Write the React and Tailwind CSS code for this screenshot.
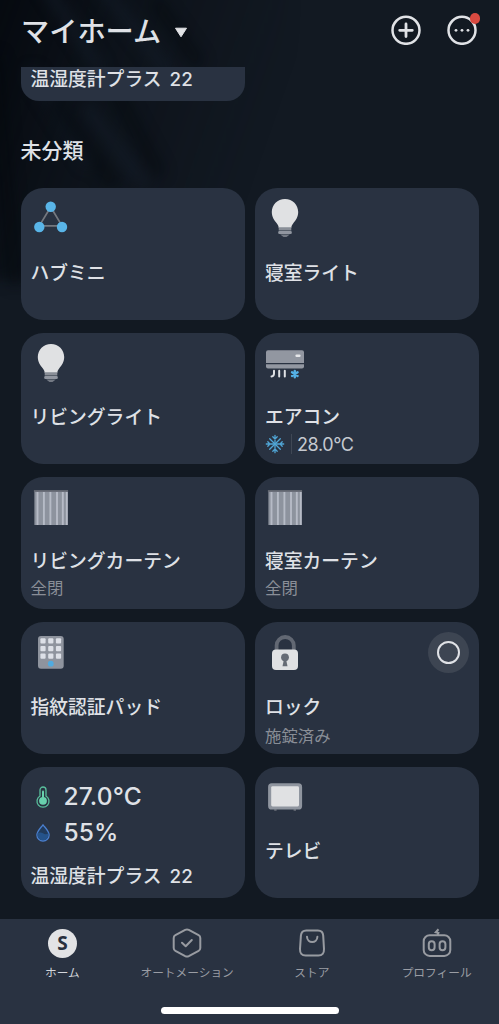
const icons = {
  hub: HubIcon,
  bulb: BulbIcon,
  aircon: AirconIcon,
  curtain: CurtainIcon,
  keypad: KeypadIcon,
  lock: LockIcon,
  tv: TvIcon,
};

const devices = [
  { id: "hub", icon: "hub", name: "ハブミニ" },
  { id: "bed-light", icon: "bulb", name: "寝室ライト" },
  { id: "living-light", icon: "bulb", name: "リビングライト" },
  { id: "aircon", icon: "aircon", name: "エアコン", temperature: "28.0°C" },
  { id: "living-curtain", icon: "curtain", name: "リビングカーテン", status: "全閉" },
  { id: "bed-curtain", icon: "curtain", name: "寝室カーテン", status: "全閉" },
  { id: "keypad", icon: "keypad", name: "指紋認証パッド" },
  { id: "lock", icon: "lock", name: "ロック", status: "施錠済み", action: true },
  { id: "meter", name: "温湿度計プラス 22", temperature: "27.0°C", humidity: "55%" },
  { id: "tv", icon: "tv", name: "テレビ" },
];

const tabs = [
  { label: "ホーム", icon: HomeTabIcon, active: true },
  { label: "オートメーション", icon: AutomationTabIcon },
  { label: "ストア", icon: StoreTabIcon },
  { label: "プロフィール", icon: ProfileTabIcon },
];

function HubIcon() {
  return (
    <svg className="size-10" viewBox="0 0 40 40">
      <path d="M19.7 9 8.3 27.8H31Z" fill="none" stroke="#74787f" strokeWidth="1.7" />
      <g fill="#59b5e8">
        <circle cx="19.7" cy="8.8" r="5.2" />
        <circle cx="8.3" cy="29" r="5.2" />
        <circle cx="31" cy="29" r="5.2" />
      </g>
    </svg>
  );
}

function BulbIcon() {
  return (
    <svg className="size-10" viewBox="0 0 40 40">
      <path
        d="M20 1C12.4 1 6.8 6.8 6.8 14.1c0 5 2.5 8.3 4.9 11.2 1.3 1.6 1.9 2.7 1.9 4.5h12.8c0-1.8.6-2.9 1.9-4.5 2.4-2.9 4.9-6.2 4.9-11.2C33.2 6.8 27.6 1 20 1Z"
        fill="#e0e1e3"
      />
      <path d="M13.7 29.5h12.6v3H13.7Z" fill="#898e97" />
      <rect x="13.2" y="33" width="13.6" height="3" rx="1.2" fill="#9196a0" />
      <path d="M15.2 36.6h9.6L21.5 39h-3Z" fill="#747a84" />
    </svg>
  );
}

function AirconIcon() {
  return (
    <svg className="size-10" viewBox="0 0 40 40">
      <path d="M3 7.3h34a2 2 0 0 1 2 2v10.8H1V9.3a2 2 0 0 1 2-2Z" fill="#9297a1" />
      <path d="M1 21.2h38v2.2a2 2 0 0 1-2 2H3a2 2 0 0 1-2-2Z" fill="#9297a1" />
      <rect x="30.4" y="11.4" width="5.2" height="2.5" rx="1.2" fill="#e6e7ea" />
      <path
        d="M9 27.8v2.7q0 2.7-2.5 3M14.2 27.8v5.7M19.8 27.8v5.7"
        fill="none"
        stroke="#dfe1e4"
        strokeLinecap="round"
        strokeWidth="2"
      />
      <path
        d="M29.8 28v6.2M27 29.3l5.6 3.6M27 32.9l5.6-3.6"
        stroke="#54b0e4"
        strokeLinecap="round"
        strokeWidth="2.4"
      />
    </svg>
  );
}

function CurtainIcon() {
  return (
    <svg className="size-10" viewBox="0 0 40 40">
      <rect x="3.4" y="4" width="33.2" height="34" fill="#8d939e" />
      <path
        d="M6.5 5v33M12.9 5v33M19.4 5v33M26 5v33M31.8 5v33M35.8 5v33"
        stroke="#b6bbc6"
        strokeWidth="1.9"
      />
      <rect x="2.9" y="3.1" width="34.2" height="1.8" fill="#666b75" />
    </svg>
  );
}

function KeypadIcon() {
  return (
    <svg className="size-10" viewBox="0 0 40 40">
      <rect x="7" y="4" width="25.7" height="32.7" rx="3" fill="#8f949e" />
      <g fill="#dde0e7">
        {[6.2, 13.9, 21.5].map((y) =>
          [9.4, 17.2, 24.9].map((x) => (
            <rect key={`${x}-${y}`} x={x} y={y} width="5.2" height="5.3" rx="1" />
          )),
        )}
      </g>
      <circle cx="19.8" cy="31.7" r="2.9" fill="#50abe0" />
    </svg>
  );
}

function LockIcon() {
  return (
    <svg className="size-10" viewBox="0 0 40 40">
      <path
        d="M11.6 19v-5.4a8.6 8.6 0 0 1 17.2 0V19"
        fill="none"
        stroke="#626873"
        strokeWidth="3.8"
      />
      <rect x="7" y="17.6" width="26" height="20.4" rx="4" fill="#e0e1e3" />
      <circle cx="20" cy="25.3" r="3.9" fill="#666b75" />
      <path d="M19 27h2l1.5 7.3h-5Z" fill="#666b75" />
    </svg>
  );
}

function TvIcon() {
  return (
    <svg className="size-10" viewBox="0 0 40 40">
      <path d="M10.4 31.5V34M29.8 31.5V34" stroke="#5a606b" strokeWidth="2.4" />
      <rect x="3.1" y="6.3" width="34" height="26.2" rx="3.6" fill="#8f959f" />
      <rect x="6.2" y="9.2" width="27.8" height="20.2" rx="1.4" fill="#e0e1e3" />
    </svg>
  );
}

function SnowflakeIcon() {
  return (
    <svg
      className="size-5"
      fill="none"
      stroke="#50a5d5"
      strokeLinecap="round"
      strokeWidth="1.3"
      viewBox="0 0 20 20"
    >
      {[0, 45, 90, 135, 180, 225, 270, 315].map((angle) => (
        <path
          d={angle % 90 === 0 ? "M10 10V1.3M7.8 2.8 10 5l2.2-2.2" : "M10 10V2.5"}
          key={angle}
          transform={`rotate(${angle} 10 10)`}
        />
      ))}
    </svg>
  );
}

function ThermometerIcon() {
  return (
    <svg className="h-[22px] w-4" viewBox="0 0 16 22">
      <path
        d="M5 10V4a3 3 0 0 1 6 0v6a6 6 0 1 1-6 0Z"
        fill="none"
        stroke="#59bf9c"
        strokeWidth="1.3"
      />
      <path d="M8 5.5V14" stroke="#68d0ad" strokeLinecap="round" strokeWidth="2" />
      <circle cx="8" cy="14.8" r="3.9" fill="#68d0ad" />
    </svg>
  );
}

function DropIcon() {
  return (
    <svg className="h-[22px] w-4" viewBox="0 0 16 22">
      <path
        d="M8 2.8C5.4 6.2 1.9 9.4 1.9 12.9a6.1 6.1 0 0 0 12.2 0C14.1 9.4 10.6 6.2 8 2.8Z"
        fill="#213b5c"
        stroke="#4a7fce"
        strokeWidth="1.3"
      />
      <path d="M2.6 11.3q2.7-1.8 5.4 0t5.4 0v1.6a5.4 5.4 0 0 1-10.8 0Z" fill="#25538a" />
    </svg>
  );
}

function HomeTabIcon() {
  return (
    <span className="grid size-[29px] place-items-center rounded-full bg-[#e2e3e5] font-['Open_Sans',sans-serif] text-[19px] leading-none font-bold text-[#29313e]">
      S
    </span>
  );
}

function AutomationTabIcon() {
  return (
    <svg
      className="size-[30px]"
      fill="none"
      stroke="#989ba1"
      strokeLinecap="round"
      strokeLinejoin="round"
      strokeWidth="2"
      viewBox="0 0 30 30"
    >
      <path d="M13.2 1.9q1.8-.9 3.6 0l9.8 5.2q1.7.9 1.7 2.8v10.2q0 1.9-1.7 2.8l-9.8 5.2q-1.8.9-3.6 0l-9.8-5.2q-1.7-.9-1.7-2.8V9.9q0-1.9 1.7-2.8Z" />
      <path d="m10 14.8 3.7 3.5 6.1-6.3" />
    </svg>
  );
}

function StoreTabIcon() {
  return (
    <svg
      className="size-[30px]"
      fill="none"
      stroke="#989ba1"
      strokeLinecap="round"
      strokeWidth="2"
      viewBox="0 0 30 30"
    >
      <path d="M9.3 2.4h11.6q5 0 5.3 5.2l.8 13.5q.2 6.3-5.6 6.3H8.6q-5.8 0-5.6-6.3L3.9 7.6q.4-5.2 5.4-5.2Z" />
      <path d="M10 8.8c.3 7 10.1 7 10.4 0" />
    </svg>
  );
}

function ProfileTabIcon() {
  return (
    <svg className="size-[30px]" fill="none" stroke="#989ba1" strokeWidth="2" viewBox="0 0 30 30">
      <rect x="1.7" y="7.3" width="26.6" height="20.6" rx="6" />
      <rect x="6.8" y="13.2" width="5.8" height="9" rx="2.9" />
      <rect x="17.6" y="13.2" width="5.8" height="9" rx="2.9" />
      <path d="M16.5 1.3 13.8 4.2l2.6.8-.9 2.3" strokeWidth="2" />
    </svg>
  );
}

function Backdrop() {
  return (
    <svg
      className="absolute inset-0 h-full w-full"
      preserveAspectRatio="none"
      viewBox="0 0 499 1024"
    >
      <defs>
        <linearGradient id="shade" x1="0" x2="1" y1="0" y2="0.35">
          <stop offset="0" stopColor="#03060b" />
          <stop offset="0.5" stopColor="#03060b" stopOpacity="0.35" />
          <stop offset="1" stopColor="#03060b" stopOpacity="0" />
        </linearGradient>
        <filter
          id="soft"
          x="-100"
          y="-100"
          width="600"
          height="600"
          colorInterpolationFilters="sRGB"
          filterUnits="userSpaceOnUse"
        >
          <feGaussianBlur stdDeviation="7" />
        </filter>
      </defs>
      <rect width="330" height="330" fill="url(#shade)" filter="url(#soft)" x="-40" y="-50" />
      <g filter="url(#soft)" fill="none" strokeWidth="11">
        <path
          d="M45 -15 100 70M30 70 90 165M100 -15l70 90M85 105l60 80"
          stroke="#141d2a"
          strokeOpacity="0.65"
        />
        <path
          d="M-5 55 15 285M50 100l65 85M110 80l50 95M155 0l45 65"
          stroke="#02050a"
          strokeOpacity="0.5"
        />
      </g>
    </svg>
  );
}

function MeterCard({ device }) {
  return (
    <article className="flex h-[131.6px] flex-col rounded-[22px] bg-[#293241] pt-[12px] pl-[10px]">
      <div className="flex h-9 items-center gap-[13px] pl-1 text-[24.5px] font-medium tracking-[0.15px]">
        <ThermometerIcon />
        <span>{device.temperature}</span>
      </div>
      <div className="flex h-9 items-center gap-[13px] pl-1 text-[24.5px] font-medium tracking-[0.15px]">
        <DropIcon />
        <span>{device.humidity}</span>
      </div>
      <h3 className="mt-[14.7px] text-[18.8px] leading-6 font-medium [word-spacing:3px]">
        {device.name}
      </h3>
    </article>
  );
}

function DeviceCard({ device }) {
  if (device.humidity) return <MeterCard device={device} />;

  const Icon = icons[device.icon];
  const titleOffset = device.icon === "curtain" ? "mt-[22.3px]" : "mt-[23.7px]";
  const statusOffset = device.icon === "lock" ? "mt-[6.3px]" : "mt-[4.2px]";

  return (
    <article className="flex h-[131.6px] flex-col rounded-[22px] bg-[#293241] pt-[10px] pl-[10px]">
      <div className="flex h-10 items-start justify-between pr-[10px]">
        <Icon />
        {device.action ? (
          <button
            aria-label={device.name}
            className="grid size-[41px] place-items-center rounded-full bg-[#3d4552]"
            type="button"
          >
            <span className="size-[23px] rounded-full border-2 border-[#e0e2e6]" />
          </button>
        ) : null}
      </div>
      <h3 className={`${titleOffset} text-[18.8px] leading-6 font-medium`}>{device.name}</h3>
      {device.temperature ? (
        <div className="mt-[3.5px] flex items-center text-[18px] leading-5 tracking-[-0.4px] text-[#c5c9d0]">
          <SnowflakeIcon />
          <span className="mx-[5.5px] h-5 w-px bg-[#404855]" />
          <span className="pt-px">{device.temperature}</span>
        </div>
      ) : null}
      {device.status ? (
        <p className={`${statusOffset} text-[16.4px] leading-5 text-[#898e97]`}>{device.status}</p>
      ) : null}
    </article>
  );
}

export default function App() {
  return (
    <div className="relative flex h-[1024px] w-[499px] flex-col overflow-hidden bg-[#121922] font-['Inter','Noto_Sans_CJK_JP',sans-serif] text-[#dfe1e6]">
      <Backdrop />

      <header className="relative flex h-[67px] shrink-0 items-start justify-between pt-[15px] pr-[22px] pl-[21px]">
        <button className="flex h-8 items-center gap-[13px]" type="button">
          <span className="pt-px text-[28.2px] leading-8 font-medium">マイホーム</span>
          <svg className="mt-[2px] h-[11px] w-[14px]" viewBox="0 0 14 11">
            <path
              d="M1.5 1.2h11L7 9.8Z"
              fill="#e2e3e6"
              stroke="#e2e3e6"
              strokeLinejoin="round"
            />
          </svg>
        </button>
        <div className="flex gap-[26px]">
          <svg
            className="size-[30px]"
            fill="none"
            stroke="#e0e2e6"
            strokeWidth="2.5"
            viewBox="0 0 30 30"
          >
            <circle cx="15" cy="15.3" r="13.5" />
            <path d="M15 9v12.6M8.7 15.3h12.6" strokeLinecap="round" strokeWidth="2.8" />
          </svg>
          <div className="relative">
            <svg className="size-[30px]" viewBox="0 0 30 30">
              <circle
                cx="15"
                cy="15.3"
                r="13.5"
                fill="none"
                stroke="#e0e2e6"
                strokeWidth="2.5"
              />
              <g fill="#e0e2e6">
                <circle cx="9" cy="15.3" r="1.4" />
                <circle cx="15" cy="15.3" r="1.4" />
                <circle cx="21" cy="15.3" r="1.4" />
              </g>
            </svg>
            <span className="absolute -top-[2px] -right-[3px] size-[10.5px] rounded-full bg-[#d94a41]" />
          </div>
        </div>
      </header>

      <main className="relative flex min-h-0 flex-1 flex-col px-[20.5px]">
        <div className="h-[34px] w-[224px] rounded-b-[18px] bg-[#293241] pt-px pl-[10px]">
          <h3 className="text-[18.8px] leading-6 font-medium [word-spacing:3px]">
            温湿度計プラス 22
          </h3>
        </div>
        <h2 className="mt-[36px] text-[21px] leading-7 font-medium">未分類</h2>
        <div className="mt-[23px] grid grid-cols-[224px_224px] gap-x-[10.5px] gap-y-[13.1px]">
          {devices.map((device) => (
            <DeviceCard device={device} key={device.id} />
          ))}
        </div>
      </main>

      <footer className="relative flex h-[105px] shrink-0 flex-col items-center bg-[#293241]">
        <nav className="grid w-full grid-cols-4">
          {tabs.map(({ label, icon: Icon, active }) => (
            <button className="flex flex-col items-center pt-[9px]" key={label} type="button">
              <span className="grid h-[30px] place-items-center">
                <Icon />
              </span>
              <span
                className={
                  active
                    ? "mt-[7px] text-[11.7px] leading-4 text-[#d3d6dc]"
                    : "mt-[7px] text-[11.7px] leading-4 text-[#9a9da4]"
                }
              >
                {label}
              </span>
            </button>
          ))}
        </nav>
        <div className="mt-[26px] h-[7px] w-[178px] rounded-full bg-white" />
      </footer>
    </div>
  );
}
